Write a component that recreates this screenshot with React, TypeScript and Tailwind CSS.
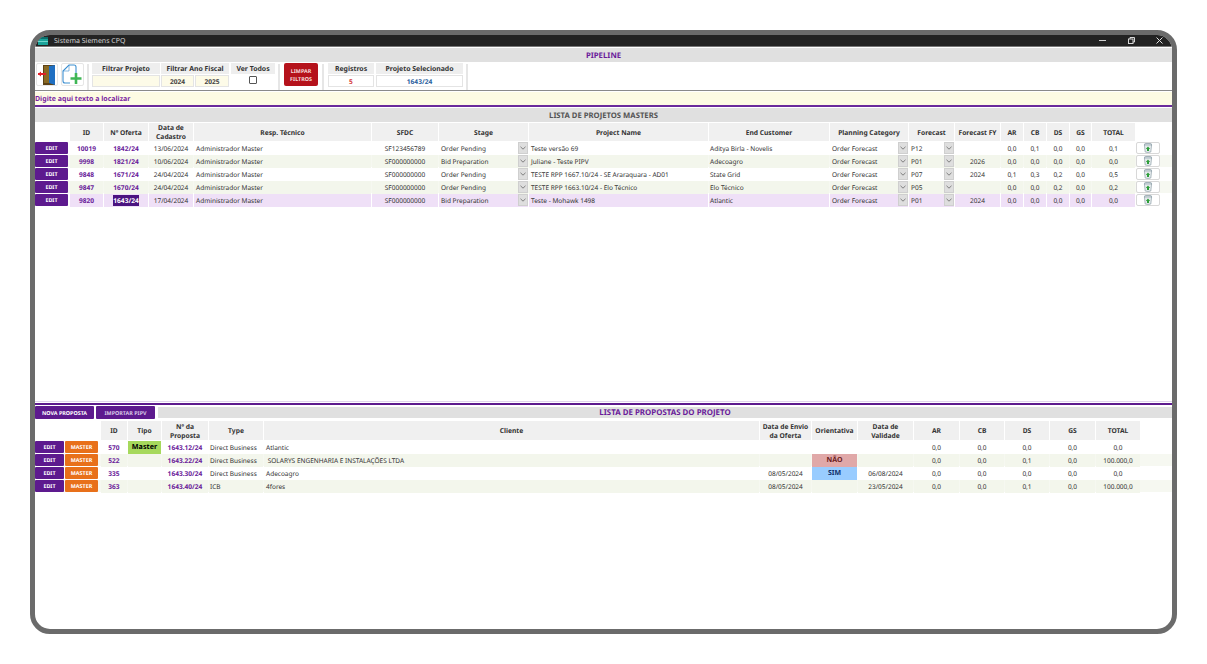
const topGrid =
  "grid grid-cols-[34px_33px_44px_44px_177px_66px_89px_179px_120px_78px_45px_45px_22px_22px_22px_21px_43px] gap-x-px";
const botGrid =
  "grid grid-cols-[29px_35px_26px_33px_46px_54px_495px_51px_45px_55px_45px_44px_44px_45px_44px] gap-x-px";

const topRows = [
  ["10019", "1842/24", "13/06/2024", "SF123456789", "Order Pending", "Teste versão 69", "Aditya Birla - Novelis", "P12", "", "0,0", "0,1", "0,0", "0,0", "0,1"],
  ["9998", "1821/24", "10/06/2024", "SF000000000", "Bid Preparation", "Juliane - Teste PIPV", "Adecoagro", "P01", "2026", "0,0", "0,0", "0,0", "0,0", "0,0"],
  ["9848", "1671/24", "24/04/2024", "SF000000000", "Order Pending", "TESTE RPP 1667.10/24 - SE Araraquara - AD01", "State Grid", "P07", "2024", "0,1", "0,3", "0,2", "0,0", "0,5"],
  ["9847", "1670/24", "24/04/2024", "SF000000000", "Order Pending", "TESTE RPP 1663.10/24 - Elo Técnico", "Elo Técnico", "P05", "", "0,0", "0,0", "0,2", "0,0", "0,2"],
  ["9820", "1643/24", "17/04/2024", "SF000000000", "Bid Preparation", "Teste - Mohawk 1498", "Atlantic", "P01", "2024", "0,0", "0,0", "0,0", "0,0", "0,0"],
];

const botRows = [
  ["570", "Master", "1643.12/24", "Direct Business", "Atlantic", "", "", "", "0,0", "0,0", "0,0", "0,0", "0,0"],
  ["522", "", "1643.22/24", "Direct Business", " SOLARYS ENGENHARIA E INSTALAÇÕES LTDA", "", "NÃO", "", "0,0", "0,0", "0,1", "0,0", "100.000,0"],
  ["335", "", "1643.30/24", "Direct Business", "Adecoagro", "08/05/2024", "SIM", "06/08/2024", "0,0", "0,0", "0,0", "0,0", "0,0"],
  ["363", "", "1643.40/24", "ICB", "4fores", "08/05/2024", "", "23/05/2024", "0,0", "0,0", "0,1", "0,0", "100.000,0"],
];

function Head({ children }: { children?: React.ReactNode }) {
  return (
    <div className="flex items-center justify-center bg-[#f0f0f0] text-center text-[6.7px] font-bold leading-[9px] text-[#333]">
      {children}
    </div>
  );
}

function Chevron() {
  return (
    <svg width="6" height="4" viewBox="0 0 6 4" fill="none">
      <path d="M0.5 0.8 L3 3.2 L5.5 0.8" stroke="#666" strokeWidth="0.8" />
    </svg>
  );
}

function Select({ text }: { text: string }) {
  return (
    <div className="flex h-[12px] items-start justify-between pl-[2px]">
      <span>{text}</span>
      <span className="flex h-[12px] w-[10px] items-center justify-center border border-[#cfcfcf] bg-[#dedede]">
        <Chevron />
      </span>
    </div>
  );
}

function Trash() {
  return (
    <svg width="10" height="10" viewBox="0 0 10 10">
      <ellipse cx="5" cy="1.7" rx="4" ry="1.3" fill="#dbe3e6" stroke="#7d919b" strokeWidth="0.7" />
      <path d="M1.4 2 L2.2 9 Q5 10 7.8 9 L8.6 2 Z" fill="#e6ecee" stroke="#8fa1a9" strokeWidth="0.7" />
      <path d="M5 3.4 L7.2 6 H6 V8 H4 V6 H2.8 Z" fill="#2e9e3a" />
    </svg>
  );
}

function TopRow({ r, i }: { r: string[]; i: number }) {
  const selected = i === 4;
  const bg = selected ? "bg-[#efe0f7]" : i % 2 === 1 ? "bg-[#f3f6ec]" : "bg-white";
  const rowBg = i % 2 === 1 && !selected ? "bg-[#f6f8f1]" : "bg-white";
  return (
    <div className={`mb-px flex h-[12px] ${rowBg}`}>
      <div className={`${topGrid} h-[12px] text-[6.5px] leading-[13px] text-[#333]`}>
        <div className="pr-px">
          <div className="h-[12px] rounded-[1px] bg-[#5d1a8e] text-center text-[5.4px] font-bold leading-[13px] text-white">EDIT</div>
        </div>
        <div className={`${bg} text-center text-[6.6px] font-bold text-[#6a1b9a]`}>{r[0]}</div>
        <div className={`${bg} text-center text-[6.6px] font-bold text-[#6a1b9a]`}>
          {selected ? <span className="bg-[#4b1480] py-px text-white">{r[1]}</span> : r[1]}
        </div>
        <div className={`${bg} text-center`}>{r[2]}</div>
        <div className={`${bg} pl-[2px]`}>Administrador Master</div>
        <div className={`${bg} text-center`}>{r[3]}</div>
        <div className={bg}><Select text={r[4]} /></div>
        <div className={`${bg} pl-[2px]`}>{r[5]}</div>
        <div className={`${bg} pl-[1px]`}>{r[6]}</div>
        <div className={bg}><Select text="Order Forecast" /></div>
        <div className={bg}><Select text={r[7]} /></div>
        <div className={`${bg} text-center`}>{r[8]}</div>
        <div className={`${bg} text-center`}>{r[9]}</div>
        <div className={`${bg} text-center`}>{r[10]}</div>
        <div className={`${bg} text-center`}>{r[11]}</div>
        <div className={`${bg} text-center`}>{r[12]}</div>
        <div className={`${bg} text-center`}>{r[13]}</div>
      </div>
      <div className="ml-[1px] flex h-[12px] w-[24px] items-center justify-center rounded-[2px] border border-[#d8d8d8] bg-white">
        <Trash />
      </div>
    </div>
  );
}

function BotRow({ r, i }: { r: string[]; i: number }) {
  const bg = i % 2 === 1 ? "bg-[#f3f6ec]" : "bg-white";
  const rowBg = i % 2 === 1 ? "bg-[#f6f8f1]" : "bg-white";
  return (
    <div className={`mb-px h-[12px] ${rowBg}`}>
      <div className={`${botGrid} h-[12px] text-[6.5px] leading-[13px] text-[#333]`}>
        <div className="h-[12px] rounded-[1px] bg-[#5d1a8e] text-center text-[5.4px] font-bold leading-[13px] text-white">EDIT</div>
        <div className="pr-[2px]">
          <div className="h-[12px] rounded-[1px] bg-[#e8701a] text-center text-[5.4px] font-bold leading-[13px] text-white">MASTER</div>
        </div>
        <div className={`${bg} text-center text-[6.6px] font-bold text-[#6a1b9a]`}>{r[0]}</div>
        <div className={`text-center text-[7.2px] font-bold ${r[1] ? "bg-[#a6d95c] text-black" : bg}`}>{r[1]}</div>
        <div className={`${bg} text-center text-[6.6px] font-bold text-[#6a1b9a]`}>{r[2]}</div>
        <div className={`${bg} pl-px`}>{r[3]}</div>
        <div className={`${bg} pl-[2px] whitespace-pre`}>{r[4]}</div>
        <div className={`${bg} text-center`}>{r[5]}</div>
        <div
          className={`text-center text-[7px] font-bold leading-[14px] ${
            r[6] === "NÃO" ? "bg-[#e0a8a8] text-[#6b1a1a]" : r[6] === "SIM" ? "bg-[#99ccff] text-[#12306b]" : bg
          }`}
        >
          {r[6]}
        </div>
        <div className={`${bg} text-center`}>{r[7]}</div>
        <div className={`${bg} text-center`}>{r[8]}</div>
        <div className={`${bg} text-center`}>{r[9]}</div>
        <div className={`${bg} text-center`}>{r[10]}</div>
        <div className={`${bg} text-center`}>{r[11]}</div>
        <div className={`${bg} text-center`}>{r[12]}</div>
      </div>
    </div>
  );
}

function Separator() {
  return <div className="h-[26px] w-[2px] bg-[#e6e6e6]" />;
}

function FilterHead({ children, w }: { children: React.ReactNode; w: string }) {
  return (
    <div className={`h-[11px] bg-[#eeeeee] text-center text-[6.9px] font-bold leading-[13px] text-[#333] ${w}`}>
      {children}
    </div>
  );
}

export default function App() {
  return (
    <div className="relative h-[664px] w-[1207px] overflow-hidden bg-white [font-family:'Liberation_Sans',Arial,sans-serif] [text-rendering:geometricPrecision]">
      <div className="absolute left-[30px] top-[30px] h-[604px] w-[1147px] overflow-hidden rounded-[20px] border-[5px] border-[#6b6b6b] bg-white">
        {/* Title bar */}
        <div className="flex h-[11px] items-center bg-[#232323] text-[7px] leading-[12px] text-[#d4d4d4]">
          <svg className="ml-[3px]" width="10" height="9" viewBox="0 0 10 9">
            <rect x="0" y="1" width="10" height="8" fill="#1aa39a" />
            <rect x="0" y="1" width="10" height="2" fill="#0c6d6a" />
            <rect x="0" y="5" width="10" height="1" fill="#6fd5cc" />
          </svg>
          <span className="ml-[6px] pt-[2px]">Sistema Siemens CPQ</span>
          <div className="ml-auto flex items-center">
            <div className="h-px w-[7px] bg-[#d0d0d0]" />
            <svg className="ml-[22px]" width="7" height="7" viewBox="0 0 7 7" fill="none" stroke="#d8d8d8" strokeWidth="1">
              <rect x="0.5" y="2" width="4.5" height="4.5" />
              <path d="M2 2 V0.5 H6.5 V5 H5" />
            </svg>
            <svg className="ml-[21px] mr-[9px]" width="7" height="7" viewBox="0 0 7 7" stroke="#e2e2e2" strokeWidth="1">
              <path d="M0.5 0.5 L6.5 6.5 M6.5 0.5 L0.5 6.5" />
            </svg>
          </div>
        </div>
        <div className="h-px bg-[#777777]" />
        <div className="h-px bg-white" />
        {/* Pipeline band */}
        <div className="h-[14px] bg-[#e0e0e0] text-center text-[7.8px] font-bold leading-[16px] text-[#6a1b9a]">PIPELINE</div>

        {/* Toolbar */}
        <div className="flex h-[28px] items-start pt-px">
          <div className="ml-px flex h-[23px] w-[22px] items-center justify-center rounded-[2px] border border-[#e6e6e6] bg-white">
            <svg width="20" height="21" viewBox="0 0 20 21">
              <rect x="6" y="1" width="12" height="20" fill="#5d4216" />
              <path d="M12 2 L18 1 V21 L12 19 Z" fill="#1f6fc2" />
              <rect x="7" y="2" width="5" height="17" fill="#8a6a24" />
              <path d="M1 10 H9" stroke="#e0202a" strokeWidth="1.8" />
              <path d="M1 10 L4 7.5 V12.5 Z" fill="#e0202a" />
            </svg>
          </div>
          <div className="ml-[3px] flex h-[23px] w-[23px] items-center justify-center rounded-[2px] border border-[#e6e6e6] bg-white">
            <svg width="21" height="21" viewBox="0 0 21 21" fill="none">
              <path d="M14 10 V3 Q14 1 12 1 H7 L1 7 V17 Q1 19 3 19 H8" stroke="#3d8fd0" strokeWidth="1.1" />
              <path d="M7 1 V7 H1" stroke="#3d8fd0" strokeWidth="0.6" />
              <path d="M14 9 V20 M8.5 14.5 H19.5" stroke="#3fb655" strokeWidth="2.6" />
            </svg>
          </div>
          <div className="ml-[3px] mt-[1px]"><Separator /></div>
          <div className="ml-[3px] w-[68px]">
            <FilterHead w="w-[68px]">Filtrar Projeto</FilterHead>
            <div className="mt-px h-[12px] border border-[#e4e4e4] bg-[#fdfbe8]" />
          </div>
          <div className="ml-px w-[68px]">
            <FilterHead w="w-[68px]">Filtrar Ano Fiscal</FilterHead>
            <div className="mt-px flex gap-px text-center text-[6.6px] font-bold leading-[11px] text-[#444]">
              <div className="h-[12px] w-[33px] border border-[#e4e4e4] bg-[#fdfbe8]">2024</div>
              <div className="h-[12px] w-[34px] border border-[#e4e4e4] bg-[#fdfbe8]">2025</div>
            </div>
          </div>
          <div className="ml-[2px] w-[44px]">
            <FilterHead w="w-[44px]">Ver Todos</FilterHead>
            <div className="mt-[2px] flex justify-center">
              <div className="h-[8px] w-[8px] rounded-[1px] border border-[#555] bg-white" />
            </div>
          </div>
          <div className="ml-[3px] mt-[1px]"><Separator /></div>
          <div className="ml-[4px] h-[23px] w-[34px] rounded-[2px] bg-[#b5121b] pt-[4px] text-center text-[5.4px] font-bold leading-[8px] text-[#f5dcdc]">
            LIMPAR<br />FILTROS
          </div>
          <div className="ml-[4px] mt-[1px]"><Separator /></div>
          <div className="ml-[4px] w-[46px]">
            <FilterHead w="w-[46px]">Registros</FilterHead>
            <div className="mt-px h-[12px] border border-[#e4e4e4] text-center text-[6.6px] font-bold leading-[11px] text-[#d43a3a]">5</div>
          </div>
          <div className="ml-[2px] w-[87px]">
            <FilterHead w="w-[87px]">Projeto Selecionado</FilterHead>
            <div className="mt-px h-[12px] border border-[#e4e4e4] text-center text-[6.6px] font-bold leading-[11px] text-[#2b5f9e]">1643/24</div>
          </div>
          <div className="ml-[3px] mt-[1px]"><Separator /></div>
        </div>
        <div className="h-px bg-[#8a8a8a]" />
        <div className="h-px bg-white" />

        {/* Search */}
        <div className="h-[15px] border-b-2 border-[#6a2a9c] bg-[#fdfbe3] text-[7px] font-bold leading-[15px] text-[#7b1fa2]">
          Digite aqui texto a localizar
        </div>
        <div className="h-px bg-white" />
        <div className="h-[14px] bg-[#e0e0e0] text-center text-[7.7px] font-bold leading-[16px] text-[#555]">
          LISTA DE PROJETOS MASTERS
        </div>
        <div className="h-px bg-white" />

        {/* Projects table */}
        <div className={`${topGrid} h-[18px]`}>
          <div />
          <Head>ID</Head>
          <Head>Nº Oferta</Head>
          <Head>Data de<br />Cadastro</Head>
          <Head>Resp. Técnico</Head>
          <Head>SFDC</Head>
          <Head>Stage</Head>
          <Head>Project Name</Head>
          <Head>End Customer</Head>
          <Head>Planning Category</Head>
          <Head>Forecast</Head>
          <Head>Forecast FY</Head>
          <Head>AR</Head>
          <Head>CB</Head>
          <Head>DS</Head>
          <Head>GS</Head>
          <Head>TOTAL</Head>
        </div>
        <div className="h-px bg-white" />
        <div className="h-[259px]">
          {topRows.map((r, i) => (
            <TopRow key={r[0]} r={r} i={i} />
          ))}
        </div>

        {/* Divider */}
        <div className="h-px bg-[#e0d3ec]" />
        <div className="h-px bg-white" />
        <div className="h-[2px] bg-[#5d1a8e]" />
        <div className="h-px bg-white" />

        {/* Proposals header */}
        <div className="flex h-[13px] items-center">
          <div className="h-[13px] w-[59px] rounded-[1px] bg-[#5d1a8e] text-center text-[5.4px] font-bold leading-[14px] text-white">NOVA PROPOSTA</div>
          <div className="ml-[2px] h-[13px] w-[59px] rounded-[1px] bg-[#5d1a8e] text-center text-[5.4px] font-bold leading-[14px] text-[#d9c8e6]">IMPORTAR PIPV</div>
          <div className="ml-[3px] h-[11px] flex-1 bg-[#e0e0e0] text-center text-[7.9px] font-bold leading-[13px] text-[#6a1b9a]">
            LISTA DE PROPOSTAS DO PROJETO
          </div>
        </div>
        <div className="h-[2px] bg-white" />

        {/* Proposals table */}
        <div className={`${botGrid} h-[19px]`}>
          <div />
          <div />
          <Head>ID</Head>
          <Head>Tipo</Head>
          <Head>Nº da<br />Proposta</Head>
          <Head>Type</Head>
          <Head>Cliente</Head>
          <Head>Data de Envio<br />da Oferta</Head>
          <Head>Orientativa</Head>
          <Head>Data de<br />Validade</Head>
          <Head>AR</Head>
          <Head>CB</Head>
          <Head>DS</Head>
          <Head>GS</Head>
          <Head>TOTAL</Head>
        </div>
        <div className="h-px bg-white" />
        <div>
          {botRows.map((r, i) => (
            <BotRow key={r[0]} r={r} i={i} />
          ))}
        </div>
      </div>
    </div>
  );
}
